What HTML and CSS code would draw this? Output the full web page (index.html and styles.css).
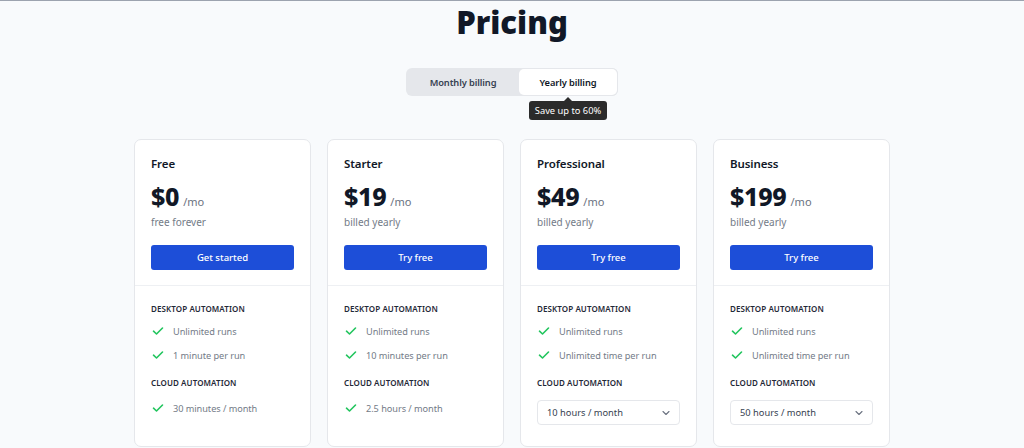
FILE: index.html
```html
<!DOCTYPE html>
<html lang="en">
<head>
<meta charset="utf-8">
<title>Pricing</title>
<link rel="stylesheet" href="styles.css">
</head>
<body>
<div class="page">
  <h1 class="title">Pricing</h1>
  <div class="toggle-wrap">
    <div class="toggle">
      <button class="toggle-btn">Monthly billing</button>
      <button class="toggle-btn active">Yearly billing</button>
    </div>
    <div class="tooltip">Save up to 60%</div>
  </div>
  <div class="cards">
    <div class="card">
      <div class="card-top">
        <div class="plan">Free</div>
        <div class="price"><span class="amount">$0</span><span class="per">/mo</span></div>
        <div class="note">free forever</div>
        <button class="cta">Get started</button>
      </div>
      <div class="features">
        <div class="group-title">Desktop automation</div>
        <div class="item"><svg class="check" viewBox="0 0 12 12"><path d="M1.5 6.2 4.5 9 10.5 3"/></svg>Unlimited runs</div>
        <div class="item"><svg class="check" viewBox="0 0 12 12"><path d="M1.5 6.2 4.5 9 10.5 3"/></svg>1 minute per run</div>
        <div class="group-title second">Cloud automation</div>
        <div class="item"><svg class="check" viewBox="0 0 12 12"><path d="M1.5 6.2 4.5 9 10.5 3"/></svg>30 minutes / month</div>
      </div>
    </div>
    <div class="card">
      <div class="card-top">
        <div class="plan">Starter</div>
        <div class="price"><span class="amount">$19</span><span class="per">/mo</span></div>
        <div class="note">billed yearly</div>
        <button class="cta">Try free</button>
      </div>
      <div class="features">
        <div class="group-title">Desktop automation</div>
        <div class="item"><svg class="check" viewBox="0 0 12 12"><path d="M1.5 6.2 4.5 9 10.5 3"/></svg>Unlimited runs</div>
        <div class="item"><svg class="check" viewBox="0 0 12 12"><path d="M1.5 6.2 4.5 9 10.5 3"/></svg>10 minutes per run</div>
        <div class="group-title second">Cloud automation</div>
        <div class="item"><svg class="check" viewBox="0 0 12 12"><path d="M1.5 6.2 4.5 9 10.5 3"/></svg>2.5 hours / month</div>
      </div>
    </div>
    <div class="card">
      <div class="card-top">
        <div class="plan">Professional</div>
        <div class="price"><span class="amount">$49</span><span class="per">/mo</span></div>
        <div class="note">billed yearly</div>
        <button class="cta">Try free</button>
      </div>
      <div class="features">
        <div class="group-title">Desktop automation</div>
        <div class="item"><svg class="check" viewBox="0 0 12 12"><path d="M1.5 6.2 4.5 9 10.5 3"/></svg>Unlimited runs</div>
        <div class="item"><svg class="check" viewBox="0 0 12 12"><path d="M1.5 6.2 4.5 9 10.5 3"/></svg>Unlimited time per run</div>
        <div class="group-title second">Cloud automation</div>
        <div class="select"><span>10 hours / month</span><svg class="chev" viewBox="0 0 10 10"><path d="M2 3.5 5 6.5 8 3.5"/></svg></div>
      </div>
    </div>
    <div class="card">
      <div class="card-top">
        <div class="plan">Business</div>
        <div class="price"><span class="amount">$199</span><span class="per">/mo</span></div>
        <div class="note">billed yearly</div>
        <button class="cta">Try free</button>
      </div>
      <div class="features">
        <div class="group-title">Desktop automation</div>
        <div class="item"><svg class="check" viewBox="0 0 12 12"><path d="M1.5 6.2 4.5 9 10.5 3"/></svg>Unlimited runs</div>
        <div class="item"><svg class="check" viewBox="0 0 12 12"><path d="M1.5 6.2 4.5 9 10.5 3"/></svg>Unlimited time per run</div>
        <div class="group-title second">Cloud automation</div>
        <div class="select"><span>50 hours / month</span><svg class="chev" viewBox="0 0 10 10"><path d="M2 3.5 5 6.5 8 3.5"/></svg></div>
      </div>
    </div>
  </div>
</div>
</body>
</html>
```

FILE: styles.css
```css
* { box-sizing: border-box; }
html, body { margin: 0; padding: 0; }
body {
  background: #f8fafc;
  border-top: 1px solid #9ca3af;
  font-family: "Noto Sans", "Open Sans", sans-serif;
  color: #111827;
  height: 448px;
  overflow: hidden;
}
.page {
  display: flex;
  flex-direction: column;
  align-items: center;
}
.title {
  margin: 0;
  font-size: 31px;
  line-height: 42px;
  font-weight: 900;
  color: #111827;
  letter-spacing: 0;
}
.toggle-wrap {
  position: relative;
  margin-top: 25px;
}
.toggle {
  display: flex;
  width: 212px;
  height: 28px;
  padding: 1px;
  background: #e5e7eb;
  border-radius: 6px;
}
.toggle-btn {
  flex: 0 0 auto;
  width: 112px;
  border: 0;
  background: transparent;
  font-family: inherit;
  font-size: 9.3px;
  font-weight: 600;
  letter-spacing: -0.1px;
  color: #374151;
  border-radius: 5px;
  padding: 0;
  cursor: pointer;
}
.toggle-btn.active {
  width: 98px;
  background: #ffffff;
  color: #111827;
  box-shadow: 0 0 0 1px #e5e7eb;
}
.tooltip {
  position: absolute;
  left: 123px;
  top: 33px;
  width: 78px;
  height: 19px;
  background: #2b2b2b;
  color: #ffffff;
  font-size: 9.3px;
  line-height: 19px;
  text-align: center;
  border-radius: 3px;
}
.tooltip::before {
  content: "";
  position: absolute;
  left: 35px;
  top: -4px;
  border-left: 4px solid transparent;
  border-right: 4px solid transparent;
  border-bottom: 4px solid #2b2b2b;
}
.cards {
  display: flex;
  gap: 16px;
  margin-top: 43px;
}
.card {
  width: 177px;
  height: 308px;
  background: #ffffff;
  border: 1px solid #e5e7eb;
  border-radius: 7px;
}
.card-top {
  padding: 14px 16px 15px;
  border-bottom: 1px solid #eef0f3;
}
.plan {
  font-size: 11.5px;
  line-height: 20px;
  font-weight: 600;
  letter-spacing: -0.1px;
  color: #111827;
}
.price {
  margin-top: 7px;
  display: flex;
  align-items: baseline;
  gap: 4px;
}
.amount {
  font-size: 25px;
  line-height: 30px;
  font-weight: 800;
  color: #111827;
  letter-spacing: -0.3px;
}
.per {
  font-size: 11px;
  color: #6b7280;
}
.note {
  margin-top: 3px;
  font-size: 10px;
  line-height: 16px;
  color: #737b87;
}
.cta {
  display: block;
  width: 100%;
  height: 25px;
  margin-top: 15px;
  border: 0;
  border-radius: 3px;
  background: #1d4ed8;
  color: #ffffff;
  font-family: inherit;
  font-size: 9.5px;
  font-weight: 500;
  padding: 0;
}
.features {
  padding: 16px 16px;
}
.group-title {
  font-size: 8px;
  line-height: 14px;
  font-weight: 600;
  text-transform: uppercase;
  letter-spacing: 0.1px;
  color: #1f2937;
}
.group-title.second {
  margin-top: 9px;
}
.item {
  display: flex;
  align-items: center;
  gap: 9px;
  height: 24px;
  font-size: 9.2px;
  letter-spacing: -0.05px;
  color: #737b87;
  padding-left: 1px;
}
.group-title + .item { margin-top: 3px; }
.group-title.second + .item { margin-top: 6px; }
.check {
  width: 12px;
  height: 12px;
  fill: none;
  stroke: #22c55e;
  stroke-width: 1.6;
  stroke-linecap: round;
  stroke-linejoin: round;
}
.select {
  margin-top: 10px;
  height: 25px;
  border: 1px solid #e5e7eb;
  border-radius: 4px;
  display: flex;
  align-items: center;
  justify-content: space-between;
  padding: 0 8px 0 9px;
  font-size: 9.3px;
  color: #374151;
}
.chev {
  width: 10px;
  height: 10px;
  fill: none;
  stroke: #6b7280;
  stroke-width: 1.1;
  stroke-linecap: round;
  stroke-linejoin: round;
}
```
